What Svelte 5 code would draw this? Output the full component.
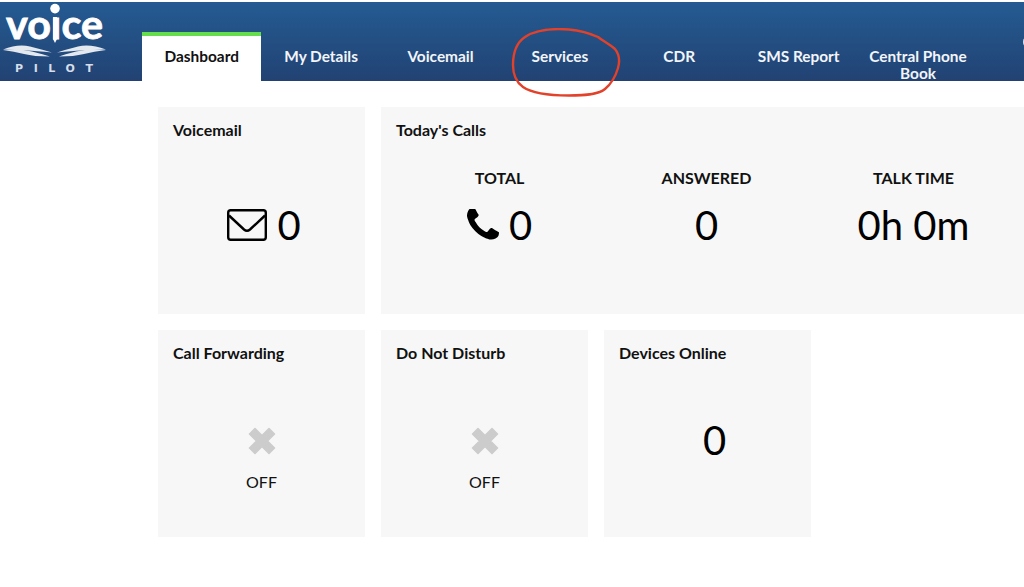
<script>
  const tabs = ['Dashboard', 'My Details', 'Voicemail', 'Services', 'CDR', 'SMS Report', 'Central Phone Book'];
</script>

<div class="page">
  <header class="header">
    <svg class="logo" viewBox="0 0 110 74" width="110" height="74" aria-label="Voice Pilot">
      <text class="logo-word" x="6" y="37" textLength="97" lengthAdjust="spacingAndGlyphs">voıce</text>
      <circle cx="55" cy="6.6" r="4.8" fill="#fff" />
      <path d="M53 15 H57 V37 L55 41 L53 37Z" fill="#fff" />
      <path class="wave" d="M3 47.5 Q18 41.5 30 44.5 T52 50.5 Q36 49 26 48.5 T3 47.5Z" />
      <path class="wave" d="M3 48 Q20 46.5 32 49.5 T50 54.5 Q34 54.5 24 52 T3 48Z" />
      <path class="wave" d="M106 47.5 Q90 41.5 78 44.5 T57 50.5 Q72 49 82 48.5 T106 47.5Z" />
      <path class="wave" d="M106 48 Q88 46.5 76 49.5 T59 54.5 Q74 54.5 84 52 T106 48Z" />
      <text class="logo-sub" x="15" y="70" textLength="78">PILOT</text>
    </svg>
    <nav class="tabs">
      {#each tabs as tab, i}
        <div class="tab" class:active={i === 0}><span>{tab}</span></div>
      {/each}
    </nav>
    <span class="edge"></span>
  </header>

  <main class="grid">
    <section class="card voicemail">
      <h2>Voicemail</h2>
      <div class="center stat">
        <svg class="mail" viewBox="0 0 40 32" width="40" height="32">
          <rect x="1.2" y="1.2" width="37.6" height="29.6" rx="2.5" fill="none" stroke="#000" stroke-width="2.4" />
          <path d="M2 6.5 L17 20.5 Q20 23 23 20.5 L38 6.5" fill="none" stroke="#000" stroke-width="2.4" />
        </svg>
        <span>0</span>
      </div>
    </section>

    <section class="card wide">
      <h2>Today's Calls</h2>
      <div class="cols">
        <div class="col">
          <h3>TOTAL</h3>
          <div class="stat">
            <svg class="phone" viewBox="192 192 1408 1408" width="32" height="32">
              <path d="M1600 1240q0 27-10 70.5t-21 68.5q-21 50-122 106-94 51-186 51-27 0-53-3.5t-57.5-12.5-47-14.5-55.5-20.5-49-18q-98-35-175-83-127-79-264-216t-216-264q-48-77-83-175-3-9-18-49t-20.5-55.5-14.5-47-12.5-57.5-3.5-53q0-92 51-186 56-101 106-122 25-11 68.5-21t70.5-10q14 0 21 3 18 6 53 76 11 19 30 54t35 63.5 31 53.5q3 4 17.5 25t21.5 35.5 7 28.5q0 20-28.5 50t-62 55-62 53-28.5 46q0 9 5 22.5t8.5 20.5 14 24 11.5 19q76 137 174 235t235 174q2 1 19 11.5t24 14 20.5 8.5 22.5 5q18 0 46-28.5t53-62 55-62 50-28.5q14 0 28.5 7t35.5 21.5 25 17.5q25 15 53.5 31t63.5 35 54 30q70 35 76 53 3 7 3 21z" fill="#000" />
            </svg>
            <span>0</span>
          </div>
        </div>
        <div class="col">
          <h3>ANSWERED</h3>
          <div class="stat"><span>0</span></div>
        </div>
        <div class="col">
          <h3>TALK TIME</h3>
          <div class="stat"><span>0h 0m</span></div>
        </div>
      </div>
    </section>

    <section class="card">
      <h2>Call Forwarding</h2>
      <div class="toggle">
        <svg class="x" viewBox="0 0 28 28" width="28" height="28">
          <path d="M7 1.5 L14 8.5 L21 1.5 L26.5 7 L19.5 14 L26.5 21 L21 26.5 L14 19.5 L7 26.5 L1.5 21 L8.5 14 L1.5 7Z" fill="#ccc" stroke="#ccc" stroke-width="1.5" stroke-linejoin="round" />
        </svg>
        <p>OFF</p>
      </div>
    </section>

    <section class="card">
      <h2>Do Not Disturb</h2>
      <div class="toggle">
        <svg class="x" viewBox="0 0 28 28" width="28" height="28">
          <path d="M7 1.5 L14 8.5 L21 1.5 L26.5 7 L19.5 14 L26.5 21 L21 26.5 L14 19.5 L7 26.5 L1.5 21 L8.5 14 L1.5 7Z" fill="#ccc" stroke="#ccc" stroke-width="1.5" stroke-linejoin="round" />
        </svg>
        <p>OFF</p>
      </div>
    </section>

    <section class="card">
      <h2>Devices Online</h2>
      <div class="online"><span>0</span></div>
    </section>
  </main>

  <svg class="scribble" viewBox="0 0 112 70" width="112" height="70" aria-hidden="true">
    <path d="M58 1.5 C44 0.5 25 1.5 14 9 C5 15 2 26 2 37 C2 47 5 54 12 59 C22 66 40 67.5 58 67.5 C72 67.5 87 67 94 61 C100 56 105 47 107 40 C109 33 108 26 104 21 C98 16 92 13 87 9 C78 5 68 2.5 58 1.5" fill="none" stroke="#e2412a" stroke-width="2.4" />
  </svg>
</div>

<style>
  :global(body) {
    margin: 0;
    background: #fff;
    overflow: hidden;
  }
  .page {
    position: relative;
    width: 1024px;
    height: 587px;
    overflow: hidden;
    font-family: Lato, "Noto Sans", sans-serif;
    color: #000;
    background: #fff;
  }
  .header {
    position: relative;
    box-sizing: border-box;
    height: 79px;
    margin-top: 2px;
    display: flex;
    align-items: flex-end;
    background: linear-gradient(#245b92, #224273);
  }
  .logo {
    flex: none;
    width: 110px;
    height: 74px;
    margin: 0 32px 5px 0;
    overflow: visible;
  }
  .logo-word {
    font: 700 40px Lato, sans-serif;
    fill: #fff;
    stroke: #fff;
    stroke-width: 0.8;
  }
  .logo-sub {
    font: 700 11px "DejaVu Sans", sans-serif;
    fill: #d5dee9;
  }
  .wave { fill: #e4e9f0; }
  .tabs {
    display: flex;
    height: 49px;
  }
  .tab {
    box-sizing: border-box;
    width: 119.4px;
    height: 49px;
    padding-top: 16px;
    color: #f2f5f9;
    text-align: center;
    font-size: 15.4px;
    font-weight: 700;
    line-height: 17px;
  }
  .tab span {
    display: block;
    padding: 0 8px;
  }
  .tab.active {
    padding-top: 12px;
    border-top: 4px solid #66dd4c;
    background: #fff;
    color: #111;
  }
  .edge {
    position: absolute;
    right: -4px;
    top: 36px;
    width: 5px;
    height: 8px;
    border-radius: 50%;
    background: #dbe2ea;
  }
  .grid {
    display: grid;
    grid-auto-rows: 207px;
    gap: 16px;
    margin: 26px 0 0 158px;
    width: 900px;
    grid-template-areas:
      "a b b b"
      "c d e .";
    grid-template-columns: 207px 207px 207px 300px;
  }
  .grid > :nth-child(1) { grid-area: a; }
  .grid > :nth-child(2) { grid-area: b; }
  .grid > :nth-child(3) { grid-area: c; }
  .grid > :nth-child(4) { grid-area: d; }
  .grid > :nth-child(5) { grid-area: e; }
  .card {
    box-sizing: border-box;
    background: #f7f7f7;
    padding: 14px 15px;
    display: flex;
    flex-direction: column;
  }
  h2,
  h3 {
    margin: 0;
    font-size: 16px;
    font-weight: 700;
    line-height: 18px;
    color: #111;
  }
  .stat {
    display: flex;
    align-items: center;
    justify-content: center;
    gap: 10px;
    font-size: 40px;
    line-height: 46px;
  }
  .center {
    margin-top: 63px;
    padding-left: 5px;
  }
  .cols {
    display: grid;
    grid-template-columns: repeat(3, 207px);
    margin-top: 30px;
  }
  .col {
    text-align: center;
  }
  .col .stat {
    margin-top: 15px;
  }
  .toggle {
    margin-top: 65px;
    text-align: center;
  }
  .x {
    display: block;
    margin: 0 auto;
  }
  .toggle p {
    margin: 18px 0 0;
    font-size: 16px;
    line-height: 18px;
    color: #111;
  }
  .online {
    margin-top: 55px;
    padding-left: 14px;
    text-align: center;
    font-size: 40px;
    line-height: 46px;
  }
  .scribble {
    position: absolute;
    left: 511px;
    top: 28px;
  }
</style>
